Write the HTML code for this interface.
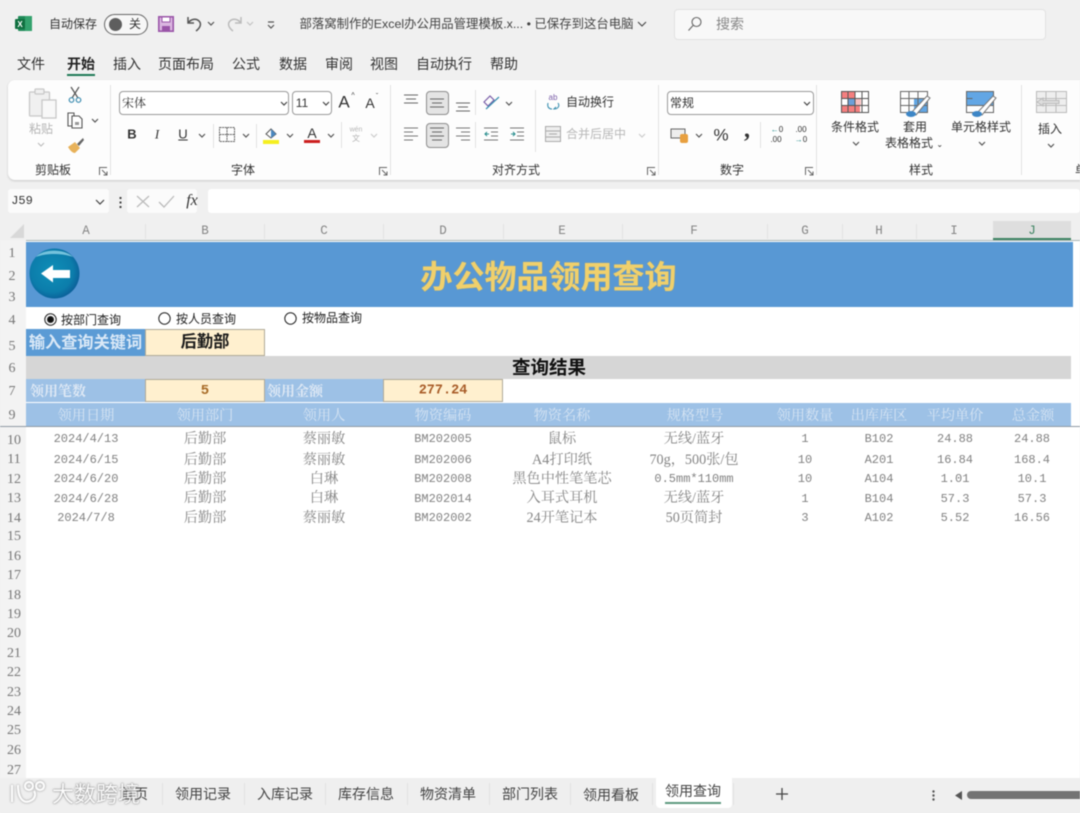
<!DOCTYPE html>
<html lang="zh"><head><meta charset="utf-8"><title>办公物品领用查询</title>
<style>
html,body{margin:0;padding:0;background:#f0f0f0}
#p{position:relative;width:1080px;height:813px;overflow:hidden;background:#f0f0f0;font-family:"Liberation Sans","Noto Sans CJK SC",sans-serif;color:#333;filter:blur(.5px)}
.a{position:absolute}
.t{position:absolute;white-space:nowrap;transform:translate(-50%,-50%);line-height:1}
.l{transform:translateY(-50%)}
.s{font-size:12px}.m{font-size:14px}.x{font-size:12px}
.g{color:#9a9a9a}
.v{position:absolute;width:1px;background:#e2e2e2}
.c{font-family:"Liberation Mono","Noto Serif CJK SC",serif;font-size:12px;color:#828282}
.z{font-family:"Liberation Serif","Noto Serif CJK SC",serif;font-size:14.2px;color:#858585}
.h{font-family:"Liberation Serif","Noto Serif CJK SC",serif;font-size:14.2px;color:#d6e4f3}
.r{font-family:"Liberation Serif",serif;font-size:14px;color:#777}
.ch{font-family:"Liberation Mono",monospace;font-size:12.5px;color:#858585}
svg{position:absolute;overflow:visible}
</style></head><body><div id="p">

<!-- title bar -->
<svg style="left:15px;top:15px" width="18" height="18"><rect x="3" y="1" width="14" height="15" rx="1" fill="#1f8a58"/><rect x="10" y="1" width="7" height="15" fill="#33a26d"/><rect y="4" width="10" height="10" rx="1" fill="#107040"/><text x="5" y="12" font-size="8" font-weight="700" fill="#fff" text-anchor="middle" font-family="Liberation Sans">X</text></svg>
<span class="t s" style="left:73px;top:24px">自动保存</span>
<div class="a" style="left:104px;top:14px;width:42px;height:19px;border:1px solid #666;border-radius:11px;background:#f7f7f7"></div>
<div class="a" style="left:109px;top:18px;width:13px;height:13px;border-radius:50%;background:#5e5e5e"></div>
<span class="t s" style="left:135px;top:24px">关</span>
<svg style="left:158px;top:16px" width="16" height="16"><rect x="0.8" y="0.8" width="14.4" height="14.4" fill="#dab6e0" stroke="#9a55a8" stroke-width="1.6"/><rect x="4" y="1" width="8" height="5" fill="#fff" stroke="#9a55a8"/><rect x="4" y="10" width="8" height="5" fill="#9a55a8"/></svg>
<svg style="left:186px;top:15px" width="18" height="18" fill="none" stroke="#555" stroke-width="1.5"><path d="M2 2v6h6M2 8c3-4 8-5 11-2 3 3 1 7-3 10"/></svg>
<svg style="left:207px;top:21px" width="8" height="5" fill="none" stroke="#555" stroke-width="1.2"><path d="M1 1l3 3 3-3"/></svg>
<svg style="left:225px;top:15px" width="18" height="18" fill="none" stroke="#bbb" stroke-width="1.5"><path d="M16 2v6h-6M16 8c-3-4-8-5-11-2-3 3-1 7 3 10"/></svg>
<svg style="left:246px;top:21px" width="8" height="5" fill="none" stroke="#c4c4c4" stroke-width="1.2"><path d="M1 1l3 3 3-3"/></svg>
<svg style="left:267px;top:21px" width="8" height="8" fill="none" stroke="#555" stroke-width="1.2"><path d="M1 1h6M1 4l3 3 3-3"/></svg>
<span class="t s" style="left:466.500px;top:24px;color:#444;font-size:12.400px">部落窝制作的Excel办公用品管理模板.x... • 已保存到这台电脑</span>
<svg style="left:637px;top:21px" width="10" height="6" fill="none" stroke="#444" stroke-width="1.1"><path d="M1 1l4 4 4-4"/></svg>
<div class="a" style="left:674px;top:9px;width:372px;height:31px;background:#f8f8f8;border:1px solid #e2e2e2;border-radius:4px;box-sizing:border-box"></div>
<svg style="left:687px;top:16px" width="16" height="16" fill="none" stroke="#666" stroke-width="1.1"><circle cx="9.5" cy="6" r="4.5"/><path d="M6 9.5L1.5 14.5"/></svg>
<span class="t m" style="left:730px;top:24px;color:#888">搜索</span>

<!-- menu -->
<span class="t m" style="left:31px;top:64px">文件</span>
<span class="t m" style="left:81px;top:64px;font-weight:700;color:#222">开始</span>
<div class="a" style="left:67px;top:74px;width:28px;height:2px;background:#1f7a55"></div>
<span class="t m" style="left:127px;top:64px">插入</span>
<span class="t m" style="left:186px;top:64px">页面布局</span>
<span class="t m" style="left:246px;top:64px">公式</span>
<span class="t m" style="left:293px;top:64px">数据</span>
<span class="t m" style="left:339px;top:64px">审阅</span>
<span class="t m" style="left:384px;top:64px">视图</span>
<span class="t m" style="left:444px;top:64px">自动执行</span>
<span class="t m" style="left:504px;top:64px">帮助</span>

<!-- ribbon -->
<div class="a" style="left:8px;top:80px;width:1090px;height:100px;background:#fdfdfd;border-radius:7px;box-shadow:0 1px 2px #c8c8c8"></div>
<div class="v" style="left:110px;top:85px;height:90px"></div>
<div class="v" style="left:390px;top:85px;height:90px"></div>
<div class="v" style="left:658px;top:85px;height:90px"></div>
<div class="v" style="left:816px;top:85px;height:90px"></div>
<div class="v" style="left:1021px;top:85px;height:90px"></div>

<!-- clipboard -->
<svg style="left:28px;top:87px" width="30" height="32" fill="#f0f0f0" stroke="#c8c8c8" stroke-width="1.3"><rect x="1.5" y="5" width="20" height="24" rx="1"/><rect x="7" y="2" width="9" height="5" rx="1"/><rect x="14" y="13" width="14" height="18" fill="#f8f8f8"/></svg>
<span class="t x" style="left:41px;top:129px;color:#b5b5b5">粘贴</span>
<svg style="left:37px;top:142px" width="8" height="5" fill="none" stroke="#bbb" stroke-width="1.1"><path d="M1 1l3 3 3-3"/></svg>
<svg style="left:68px;top:86px" width="14" height="18" fill="none" stroke="#555" stroke-width="1.2"><path d="M3 1l7 11M11 1L4 12"/><circle cx="3.5" cy="14" r="2.3" stroke="#3c8cb0"/><circle cx="10.5" cy="14" r="2.3" stroke="#3c8cb0"/></svg>
<svg style="left:67px;top:112px" width="17" height="17" fill="#fff" stroke="#555" stroke-width="1.1"><path d="M1 1h6v13H1z"/><path d="M5 4h7l3 3v9H5z"/><rect x="8" y="10" width="4" height="3" fill="#999" stroke="none"/></svg>
<svg style="left:91px;top:118px" width="8" height="5" fill="none" stroke="#555" stroke-width="1.2"><path d="M1 1l3 3 3-3"/></svg>
<svg style="left:67px;top:137px" width="18" height="17"><path d="M1 10l7-5 5 6-5 5c-3 0-5-3-7-6z" fill="#e8b25a"/><path d="M10 7l6-6 1 2-5 6z" fill="#666"/></svg>
<span class="t x" style="left:53px;top:170px">剪贴板</span>
<svg style="left:99px;top:167px" width="9" height="9" fill="none" stroke="#666"><path d="M.5 8V.5H8M3 3l5 5M8 4.500V8H4.500"/></svg>

<!-- font -->
<div class="a" style="left:119px;top:91px;width:170px;height:24px;background:#fff;border:1px solid #9a9a9a;border-radius:4px;box-sizing:border-box"></div>
<span class="t x l" style="left:122px;top:103px;transform:translateY(-50%);font-family:'Noto Serif CJK SC',serif">宋体</span>
<svg style="left:280px;top:101px" width="8" height="5" fill="none" stroke="#444" stroke-width="1.2"><path d="M1 1l3 3 3-3"/></svg>
<div class="a" style="left:292px;top:91px;width:40px;height:24px;background:#fff;border:1px solid #9a9a9a;border-radius:4px;box-sizing:border-box"></div>
<span class="t s" style="left:302px;top:103px">11</span>
<svg style="left:322px;top:101px" width="8" height="5" fill="none" stroke="#444" stroke-width="1.2"><path d="M1 1l3 3 3-3"/></svg>
<span class="t" style="left:344px;top:102px;font-size:17px">A</span><span class="t" style="left:353px;top:96px;font-size:7px">^</span>
<span class="t" style="left:370px;top:103px;font-size:14px">A</span><span class="t" style="left:377px;top:97px;font-size:7px">ˇ</span>
<span class="t" style="left:132px;top:134px;font-size:13px;font-weight:700">B</span>
<span class="t" style="left:157px;top:134px;font-size:13px;font-style:italic;font-family:'Liberation Serif'">I</span>
<span class="t" style="left:183px;top:134px;font-size:13px;text-decoration:underline">U</span>
<svg style="left:198px;top:133px" width="8" height="5" fill="none" stroke="#555" stroke-width="1.2"><path d="M1 1l3 3 3-3"/></svg>
<div class="v" style="left:213px;top:124px;height:24px"></div>
<svg style="left:219px;top:127px" width="16" height="15" fill="none" stroke="#666"><path d="M.5.5h15v14H.5zM8 .5v14M.5 7.500h15" stroke-dasharray="2 .6"/></svg>
<svg style="left:242px;top:133px" width="8" height="5" fill="none" stroke="#555" stroke-width="1.2"><path d="M1 1l3 3 3-3"/></svg>
<div class="v" style="left:256px;top:124px;height:24px"></div>
<svg style="left:263px;top:126px" width="16" height="18"><path d="M3 8l5-5 5 5-5 4z" fill="#fff" stroke="#555"/><path d="M8 3l5 5-5 4z" fill="#4a88c0"/><rect y="14" width="16" height="4" fill="#f5ef20"/></svg>
<svg style="left:286px;top:133px" width="8" height="5" fill="none" stroke="#555" stroke-width="1.2"><path d="M1 1l3 3 3-3"/></svg>
<span class="t" style="left:312px;top:133px;font-size:14px">A</span>
<div class="a" style="left:304px;top:140px;width:16px;height:3px;background:#cc1f1f"></div>
<svg style="left:327px;top:133px" width="8" height="5" fill="none" stroke="#555" stroke-width="1.2"><path d="M1 1l3 3 3-3"/></svg>
<div class="v" style="left:341px;top:122px;height:26px"></div>
<span class="t" style="left:356px;top:130px;font-size:7px;color:#b5b5b5">wén</span>
<span class="t" style="left:356px;top:139px;font-size:8px;color:#b5b5b5">文</span>
<svg style="left:370px;top:133px" width="8" height="5" fill="none" stroke="#ccc" stroke-width="1.2"><path d="M1 1l3 3 3-3"/></svg>
<span class="t x" style="left:243px;top:170px">字体</span>
<svg style="left:379px;top:167px" width="9" height="9" fill="none" stroke="#666"><path d="M.5 8V.5H8M3 3l5 5M8 4.500V8H4.500"/></svg>

<!-- align -->
<div class="a" style="left:426px;top:91px;width:23px;height:24px;background:#e4e4e4;border:1px solid #8c8c8c;border-radius:4px;box-sizing:border-box"></div>
<svg style="left:404px;top:94px" width="70" height="20" fill="none" stroke="#666" stroke-width="1.1"><path d="M0 1h14M2 5h10M0 9h14"/><path d="M26 5h14M28 9h10M26 13h14"/><path d="M52 9h14M54 13h10M52 17h14"/></svg>
<div class="v" style="left:475px;top:90px;height:25px"></div>
<svg style="left:483px;top:93px" width="18" height="18" fill="none" stroke="#7a5ea8" stroke-width="1.2"><path d="M1 9l6-6 4 4-6 6z"/><path d="M3 16L16 4" stroke="#3a8fb0"/></svg>
<svg style="left:505px;top:101px" width="8" height="5" fill="none" stroke="#555" stroke-width="1.2"><path d="M1 1l3 3 3-3"/></svg>
<div class="v" style="left:535px;top:90px;height:62px"></div>
<span class="t" style="left:553px;top:98px;font-size:8px;color:#7a5ea8">ab</span>
<svg style="left:547px;top:102px" width="14" height="9" fill="none" stroke="#3a8fb0" stroke-width="1.1"><path d="M1 1c-1 4 1 6 4 6M11 1c2 3 0 6-4 6l2-2"/></svg>
<span class="t x" style="left:590px;top:102px">自动换行</span>
<svg style="left:404px;top:127px" width="15" height="15" fill="none" stroke="#777" stroke-width="1.1"><path d="M0 1h14M0 5h9M0 9h14M0 13h9"/></svg>
<div class="a" style="left:426px;top:123px;width:23px;height:25px;background:#e4e4e4;border:1px solid #8c8c8c;border-radius:4px;box-sizing:border-box"></div>
<svg style="left:430px;top:127px" width="15" height="15" fill="none" stroke="#666" stroke-width="1.1"><path d="M0 1h14M2 5h10M0 9h14M2 13h10"/></svg>
<svg style="left:456px;top:127px" width="15" height="15" fill="none" stroke="#777" stroke-width="1.1"><path d="M0 1h14M5 5h9M0 9h14M5 13h9"/></svg>
<div class="v" style="left:475px;top:122px;height:26px"></div>
<svg style="left:484px;top:127px" width="15" height="15" fill="none" stroke="#777" stroke-width="1.1"><path d="M0 1h14M7 5h7M7 9h7M0 13h14"/><path d="M5 7H1M3 5L1 7l2 2" stroke="#2c8f8f"/></svg>
<svg style="left:510px;top:127px" width="15" height="15" fill="none" stroke="#777" stroke-width="1.1"><path d="M0 1h14M7 5h7M7 9h7M0 13h14"/><path d="M1 7h4M3 5l2 2-2 2" stroke="#2c8f8f"/></svg>
<svg style="left:545px;top:126px" width="16" height="16" fill="#eee" stroke="#aaa"><rect x=".5" y=".5" width="15" height="15"/><path d="M.5 5h15M.5 11h15M4 8h8" fill="none"/></svg>
<span class="t x" style="left:596px;top:134px;color:#b8b8b8">合并后居中</span>
<svg style="left:638px;top:133px" width="8" height="5" fill="none" stroke="#ccc" stroke-width="1.2"><path d="M1 1l3 3 3-3"/></svg>
<span class="t x" style="left:516px;top:170px">对齐方式</span>
<svg style="left:647px;top:167px" width="9" height="9" fill="none" stroke="#666"><path d="M.5 8V.5H8M3 3l5 5M8 4.500V8H4.500"/></svg>

<!-- number -->
<div class="a" style="left:667px;top:91px;width:147px;height:24px;background:#fff;border:1px solid #9a9a9a;border-radius:4px;box-sizing:border-box"></div>
<span class="t x" style="left:682px;top:103px;font-family:'Noto Sans CJK SC',sans-serif">常规</span>
<svg style="left:803px;top:101px" width="8" height="5" fill="none" stroke="#444" stroke-width="1.2"><path d="M1 1l3 3 3-3"/></svg>
<svg style="left:671px;top:128px" width="18" height="16"><rect y="1" width="14" height="9" fill="#eee" stroke="#666"/><rect x="9" y="6" width="8" height="9" rx="2" fill="#e8a040"/></svg>
<svg style="left:695px;top:133px" width="8" height="5" fill="none" stroke="#555" stroke-width="1.2"><path d="M1 1l3 3 3-3"/></svg>
<span class="t" style="left:721px;top:135px;font-size:17px">%</span>
<span class="t" style="left:747px;top:130px;font-size:24px;font-weight:700;font-family:'Liberation Serif'">,</span>
<div class="v" style="left:760px;top:122px;height:26px"></div>
<span class="t" style="left:777px;top:130px;font-size:8px"><span style="color:#2c8f8f">←</span>0</span>
<span class="t" style="left:776px;top:140px;font-size:8px">.00</span>
<span class="t" style="left:801px;top:130px;font-size:8px">.00</span>
<span class="t" style="left:801px;top:140px;font-size:8px"><span style="color:#2c8f8f">→</span>0</span>
<span class="t x" style="left:732px;top:170px">数字</span>
<svg style="left:805px;top:167px" width="9" height="9" fill="none" stroke="#666"><path d="M.5 8V.5H8M3 3l5 5M8 4.500V8H4.500"/></svg>

<!-- styles -->
<svg style="left:841px;top:91px" width="29" height="23"><rect width="28" height="22" fill="#fff"/><path d="M1 1h13v6H1zM1 15h18v6H1z" fill="#f47f7f"/><path d="M7 8h13v6H7z" fill="#f7c0c0"/><rect x="7" y="8" width="7" height="6" fill="#6d9fd8"/><path d="M.5.500h27v21H.5zM7 .5v21M14 .5v21M21 .5v21M.5 7.500h27M.5 14.500h27" fill="none" stroke="#555"/></svg>
<span class="t x" style="left:855px;top:127px">条件格式</span>
<svg style="left:852px;top:141px" width="8" height="5" fill="none" stroke="#555" stroke-width="1.2"><path d="M1 1l3 3 3-3"/></svg>
<svg style="left:900px;top:91px" width="32" height="27"><rect x="14" y="7" width="14" height="14" fill="#62a6e4"/><path d="M.5.500h27v21H.5zM9 .5v21M18 .5v21M.5 7.500h27M.5 14.500h27" fill="none" stroke="#666"/><path d="M11 22L27 5l3 2-14 17z" fill="#fff" stroke="#777"/><ellipse cx="11" cy="23" rx="5" ry="3" fill="#3d86c6"/></svg>
<span class="t x" style="left:915px;top:127px">套用</span>
<span class="t x" style="left:914px;top:143px">表格格式 <span style="font-size:8px">⌄</span></span>
<svg style="left:966px;top:91px" width="32" height="27"><rect x="1" y="1" width="26" height="14" fill="#62a6e4"/><path d="M.5.500h27v21H.5zM.5 7.500h6M.5 14.500h27" fill="none" stroke="#666"/><path d="M11 22L27 5l3 2-14 17z" fill="#fff" stroke="#777"/><ellipse cx="11" cy="23" rx="5" ry="3" fill="#3d86c6"/></svg>
<span class="t x" style="left:981px;top:127px">单元格样式</span>
<svg style="left:978px;top:141px" width="8" height="5" fill="none" stroke="#555" stroke-width="1.2"><path d="M1 1l3 3 3-3"/></svg>
<span class="t x" style="left:921px;top:170px">样式</span>
<svg style="left:1036px;top:91px" width="31" height="22" fill="#eee" stroke="#bbb"><rect x=".5" y=".5" width="30" height="21"/><path d="M10 .5v21M20 .5v21M.5 7.500h30M.5 14.500h30" fill="none"/><path d="M1 11l6-4v2.500h16v3H7V15z" fill="#ddd"/></svg>
<span class="t x" style="left:1050px;top:129px">插入</span>
<svg style="left:1047px;top:143px" width="8" height="5" fill="none" stroke="#555" stroke-width="1.2"><path d="M1 1l3 3 3-3"/></svg>
<span class="t x" style="left:1081px;top:170px">单</span>

<!-- formula bar -->
<div class="a" style="left:8px;top:189px;width:101px;height:24px;background:#fbfbfb;border-radius:3px"></div>
<span class="t" style="left:22px;top:201px;font-size:12px;font-family:'Liberation Mono'">J59</span>
<svg style="left:95px;top:199px" width="10" height="6" fill="none" stroke="#444" stroke-width="1.2"><path d="M1 1l4 4 4-4"/></svg>
<svg style="left:119px;top:197px" width="3" height="11" fill="#444"><rect width="2" height="2" x=".5"/><rect width="2" height="2" x=".5" y="4.500"/><rect width="2" height="2" x=".5" y="9"/></svg>
<div class="a" style="left:127px;top:189px;width:70px;height:24px;background:#fbfbfb;border-radius:3px"></div>
<svg style="left:136px;top:195px" width="15" height="13" fill="none" stroke="#bcbcbc" stroke-width="1.3"><path d="M1 1l12 11M13 1L1 12"/></svg>
<svg style="left:158px;top:195px" width="18" height="13" fill="none" stroke="#bcbcbc" stroke-width="1.3"><path d="M1 7l5 5L16 1"/></svg>
<span class="t" style="left:192px;top:201px;font-size:16px;font-style:italic;font-family:'Liberation Serif';color:#333">fx</span>
<div class="a" style="left:208px;top:189px;width:872px;height:24px;background:#fff;border-radius:3px"></div>

<!-- sheet area -->
<div class="a" style="left:0;top:240px;width:26px;height:538px;background:#f3f3f3"></div>
<div class="a" style="left:26px;top:240px;width:1054px;height:538px;background:#fff"></div>
<svg style="left:10px;top:224px" width="14" height="14"><path d="M14 0v14H0z" fill="#d8d8d8"/></svg>
<div class="a" style="left:993px;top:221px;width:78px;height:19px;background:#dedede;border-bottom:2px solid #3e8462;box-sizing:border-box"></div>
<div class="a" style="left:26px;top:240px;width:1054px;height:1px;background:#a9b5b5"></div>
<div class="v" style="left:145px;top:224px;height:15px"></div><div class="v" style="left:264px;top:224px;height:15px"></div><div class="v" style="left:383px;top:224px;height:15px"></div><div class="v" style="left:503px;top:224px;height:15px"></div><div class="v" style="left:622px;top:224px;height:15px"></div><div class="v" style="left:767px;top:224px;height:15px"></div><div class="v" style="left:842px;top:224px;height:15px"></div><div class="v" style="left:916px;top:224px;height:15px"></div>
<span class="t ch" style="left:86px;top:231px">A</span><span class="t ch" style="left:205px;top:231px">B</span><span class="t ch" style="left:324px;top:231px">C</span><span class="t ch" style="left:443px;top:231px">D</span><span class="t ch" style="left:562px;top:231px">E</span><span class="t ch" style="left:694px;top:231px">F</span><span class="t ch" style="left:805px;top:231px">G</span><span class="t ch" style="left:879px;top:231px">H</span><span class="t ch" style="left:954px;top:231px">I</span><span class="t ch" style="left:1032px;top:231px;color:#3e8462">J</span>

<span class="t r" style="left:12px;top:254px">1</span><span class="t r" style="left:12px;top:277px">2</span><span class="t r" style="left:12px;top:298px">3</span><span class="t r" style="left:12px;top:321px">4</span><span class="t r" style="left:12px;top:347px">5</span><span class="t r" style="left:12px;top:369px">6</span><span class="t r" style="left:12px;top:392px">7</span><span class="t r" style="left:12px;top:416px">9</span><span class="t r" style="left:14px;top:441px">10</span><span class="t r" style="left:14px;top:460px">11</span><span class="t r" style="left:14px;top:480px">12</span><span class="t r" style="left:14px;top:499px">13</span><span class="t r" style="left:14px;top:519px">14</span><span class="t r" style="left:14px;top:537px">15</span><span class="t r" style="left:14px;top:557px">16</span><span class="t r" style="left:14px;top:576px">17</span><span class="t r" style="left:14px;top:596px">18</span><span class="t r" style="left:14px;top:615px">19</span><span class="t r" style="left:14px;top:634px">20</span><span class="t r" style="left:14px;top:654px">21</span><span class="t r" style="left:14px;top:673px">22</span><span class="t r" style="left:14px;top:693px">23</span><span class="t r" style="left:14px;top:712px">24</span><span class="t r" style="left:14px;top:731px">25</span><span class="t r" style="left:14px;top:751px">26</span><span class="t r" style="left:14px;top:771px">27</span>

<!-- banner -->
<div class="a" style="left:26px;top:242px;width:1047px;height:65px;background:#5898d4"></div>
<svg style="left:28px;top:248px" width="54" height="52"><defs><radialGradient id="bg" cx="45%" cy="45%" r="60%"><stop offset="0" stop-color="#0f8fb8"/><stop offset=".7" stop-color="#0c7dab"/><stop offset="1" stop-color="#0a5a96"/></radialGradient></defs><circle cx="26.500" cy="25.500" r="25" fill="url(#bg)"/><path d="M8 9C14 1 36 0 45 9 34 5 18 5 8 9z" fill="#8fd3e8" opacity=".8"/><path d="M13 25.500L25 17v5h17v8H25v4.500z" fill="#fff"/></svg>
<span class="t" style="left:548.500px;top:277px;font-size:32px;font-weight:700;color:#f0d06c;text-shadow:0 0 1px #c9a94f;font-family:'Liberation Sans','Noto Sans CJK SC',sans-serif">办公物品领用查询</span>

<!-- radios -->
<svg style="left:44px;top:313px" width="14" height="14" fill="none" stroke="#222"><circle cx="6.500" cy="6.500" r="5.700"/><circle cx="6.500" cy="6.500" r="3" fill="#111"/></svg>
<span class="t x" style="left:91px;top:320px;color:#222">按部门查询</span>
<svg style="left:158px;top:312px" width="14" height="14" fill="none" stroke="#222"><circle cx="6.500" cy="6.500" r="5.700"/></svg>
<span class="t x" style="left:206px;top:319px;color:#222">按人员查询</span>
<svg style="left:284px;top:312px" width="14" height="14" fill="none" stroke="#222"><circle cx="6.500" cy="6.500" r="5.700"/></svg>
<span class="t x" style="left:332px;top:318px;color:#222">按物品查询</span>

<!-- row 5 -->
<div class="a" style="left:26px;top:329px;width:119px;height:27px;background:#5b9bd5"></div>
<span class="t" style="left:85.500px;top:343px;font-size:16.200px;font-weight:700;color:#dbe9f7">输入查询关键词</span>
<div class="a" style="left:145px;top:329px;width:120px;height:27px;background:#fff0cf;border:1px solid #b0aa98;box-sizing:border-box"></div>
<span class="t" style="left:205px;top:342px;font-size:16.300px;font-weight:700;color:#1a1a1a">后勤部</span>

<!-- row 6 -->
<div class="a" style="left:26px;top:356px;width:1045px;height:23px;background:#d6d6d6"></div>
<span class="t" style="left:549px;top:368px;font-size:18.500px;font-weight:700;color:#111">查询结果</span>

<!-- row 7 -->
<div class="a" style="left:26px;top:379px;width:119px;height:23px;background:#9dc1e6"></div>
<span class="t l" style="left:30px;top:391px;transform:translateY(-50%);font-size:14px;font-weight:700;color:#dfe9f5;font-family:'Noto Serif CJK SC',serif">领用笔数</span>
<div class="a" style="left:145px;top:379px;width:120px;height:23px;background:#fff0cf;border:1px solid #b0aa98;box-sizing:border-box"></div>
<span class="t" style="left:205px;top:391px;font-size:14px;font-weight:700;color:#a86c28;font-family:'Liberation Mono'">5</span>
<div class="a" style="left:265px;top:379px;width:118px;height:23px;background:#9dc1e6"></div>
<span class="t l" style="left:267px;top:391px;transform:translateY(-50%);font-size:14px;font-weight:700;color:#dfe9f5;font-family:'Noto Serif CJK SC',serif">领用金额</span>
<div class="a" style="left:383px;top:379px;width:120px;height:23px;background:#fff0cf;border:1px solid #b0aa98;box-sizing:border-box"></div>
<span class="t" style="left:443px;top:391px;font-size:13.500px;font-weight:700;color:#a85c28;font-family:'Liberation Mono'">277.24</span>

<!-- row 9 -->
<div class="a" style="left:26px;top:403px;width:1045px;height:23px;background:#9dc1e6"></div>
<div class="a" style="left:0;top:426px;width:1080px;height:1px;background:#8f9aa5"></div>
<span class="t h" style="left:86px;top:416px">领用日期</span><span class="t h" style="left:205px;top:416px">领用部门</span><span class="t h" style="left:324px;top:416px">领用人</span><span class="t h" style="left:443px;top:416px">物资编码</span><span class="t h" style="left:562px;top:416px">物资名称</span><span class="t h" style="left:695px;top:416px">规格型号</span><span class="t h" style="left:805px;top:416px">领用数量</span><span class="t h" style="left:879px;top:416px">出库库区</span><span class="t h" style="left:955px;top:416px">平均单价</span><span class="t h" style="left:1033px;top:416px">总金额</span>

<!-- data -->
<span class="t c" style="left:86px;top:439px">2024/4/13</span><span class="t z" style="left:205px;top:439px">后勤部</span><span class="t z" style="left:324px;top:439px">蔡丽敏</span><span class="t c" style="left:443px;top:439px">BM202005</span><span class="t z" style="left:562px;top:439px">鼠标</span><span class="t z" style="left:694px;top:439px">无线/蓝牙</span><span class="t c" style="left:805px;top:439px">1</span><span class="t c" style="left:879px;top:439px">B102</span><span class="t c" style="left:955px;top:439px">24.88</span><span class="t c" style="left:1032px;top:439px">24.88</span>
<span class="t c" style="left:86px;top:460px">2024/6/15</span><span class="t z" style="left:205px;top:460px">后勤部</span><span class="t z" style="left:324px;top:460px">蔡丽敏</span><span class="t c" style="left:443px;top:460px">BM202006</span><span class="t z" style="left:562px;top:460px">A4打印纸</span><span class="t z" style="left:694px;top:460px">70g，500张/包</span><span class="t c" style="left:805px;top:460px">10</span><span class="t c" style="left:879px;top:460px">A201</span><span class="t c" style="left:955px;top:460px">16.84</span><span class="t c" style="left:1032px;top:460px">168.4</span>
<span class="t c" style="left:86px;top:479px">2024/6/20</span><span class="t z" style="left:205px;top:479px">后勤部</span><span class="t z" style="left:324px;top:479px">白琳</span><span class="t c" style="left:443px;top:479px">BM202008</span><span class="t z" style="left:562px;top:479px">黑色中性笔笔芯</span><span class="t c" style="left:694px;top:479px">0.5mm*110mm</span><span class="t c" style="left:805px;top:479px">10</span><span class="t c" style="left:879px;top:479px">A104</span><span class="t c" style="left:955px;top:479px">1.01</span><span class="t c" style="left:1032px;top:479px">10.1</span>
<span class="t c" style="left:86px;top:499px">2024/6/28</span><span class="t z" style="left:205px;top:498px">后勤部</span><span class="t z" style="left:324px;top:498px">白琳</span><span class="t c" style="left:443px;top:499px">BM202014</span><span class="t z" style="left:562px;top:498px">入耳式耳机</span><span class="t z" style="left:694px;top:498px">无线/蓝牙</span><span class="t c" style="left:805px;top:499px">1</span><span class="t c" style="left:879px;top:499px">B104</span><span class="t c" style="left:955px;top:499px">57.3</span><span class="t c" style="left:1032px;top:499px">57.3</span>
<span class="t c" style="left:86px;top:518px">2024/7/8</span><span class="t z" style="left:205px;top:518px">后勤部</span><span class="t z" style="left:324px;top:518px">蔡丽敏</span><span class="t c" style="left:443px;top:518px">BM202002</span><span class="t z" style="left:562px;top:518px">24开笔记本</span><span class="t z" style="left:694px;top:518px">50页简封</span><span class="t c" style="left:805px;top:518px">3</span><span class="t c" style="left:879px;top:518px">A102</span><span class="t c" style="left:955px;top:518px">5.52</span><span class="t c" style="left:1032px;top:518px">16.56</span>

<!-- tabs -->
<div class="a" style="left:0;top:778px;width:1080px;height:35px;background:#efefef"></div>
<div class="a" style="left:656px;top:778px;width:76px;height:30px;background:#fff;border-radius:0 0 4px 4px"></div>
<span class="t m" style="left:134px;top:794px;color:#444">首页</span>
<span class="t m" style="left:203px;top:794px;color:#444">领用记录</span>
<span class="t m" style="left:285px;top:794px;color:#444">入库记录</span>
<span class="t m" style="left:366px;top:794px;color:#444">库存信息</span>
<span class="t m" style="left:448px;top:794px;color:#444">物资清单</span>
<span class="t m" style="left:530px;top:794px;color:#444">部门列表</span>
<span class="t m" style="left:611px;top:795px;color:#444">领用看板</span>
<span class="t m" style="left:693px;top:791px;color:#444">领用查询</span>
<div class="a" style="left:665px;top:802px;width:56px;height:2px;background:#5f9a80"></div>
<div class="v" style="left:162px;top:783px;height:22px"></div><div class="v" style="left:244px;top:783px;height:22px"></div><div class="v" style="left:325px;top:783px;height:22px"></div><div class="v" style="left:407px;top:783px;height:22px"></div><div class="v" style="left:489px;top:783px;height:22px"></div><div class="v" style="left:570px;top:783px;height:22px"></div><div class="v" style="left:652px;top:783px;height:22px"></div><div class="v" style="left:733px;top:783px;height:22px"></div>
<svg style="left:776px;top:788px" width="12" height="12" stroke="#444" stroke-width="1.3"><path d="M6 0v12M0 6h12"/></svg>
<svg style="left:932px;top:790px" width="3" height="11" fill="#555"><circle cx="1.500" cy="1.500" r="1.200"/><circle cx="1.500" cy="5.500" r="1.200"/><circle cx="1.500" cy="9.500" r="1.200"/></svg>
<svg style="left:955px;top:791px" width="7" height="9" fill="#555"><path d="M7 0v9L0 4.500z"/></svg>
<div class="a" style="left:967px;top:791px;width:120px;height:8px;background:#737373;border-radius:4px"></div>

<!-- watermark -->
<svg style="left:8px;top:779px;filter:drop-shadow(0 0 1px #777)" width="40" height="30" fill="none" stroke="#fff" stroke-width="2.200" opacity=".85"><path d="M4 6v17M10 6c0 14 6 20 14 15 3-2 4-6 2-9"/><circle cx="21" cy="7" r="4"/><circle cx="32" cy="7" r="4"/></svg>
<span class="t" style="left:96px;top:795px;font-size:22px;color:#fff;opacity:.8;text-shadow:0 0 2px #666,0 0 1px #666">大数跨境</span>

</div></body></html>
